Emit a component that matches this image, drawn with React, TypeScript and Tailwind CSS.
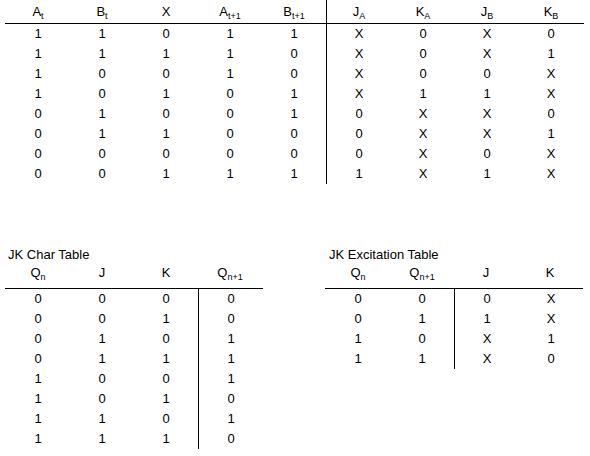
import React from "react";

type Cell = string | [string, string];

const topLeftHead: Cell[] = [["A", "t"], ["B", "t"], "X", ["A", "t+1"], ["B", "t+1"]];
const topRightHead: Cell[] = [["J", "A"], ["K", "A"], ["J", "B"], ["K", "B"]];
const topLeft = [
  ["1", "1", "0", "1", "1"],
  ["1", "1", "1", "1", "0"],
  ["1", "0", "0", "1", "0"],
  ["1", "0", "1", "0", "1"],
  ["0", "1", "0", "0", "1"],
  ["0", "1", "1", "0", "0"],
  ["0", "0", "0", "0", "0"],
  ["0", "0", "1", "1", "1"],
];
const topRight = [
  ["X", "0", "X", "0"],
  ["X", "0", "X", "1"],
  ["X", "0", "0", "X"],
  ["X", "1", "1", "X"],
  ["0", "X", "X", "0"],
  ["0", "X", "X", "1"],
  ["0", "X", "0", "X"],
  ["1", "X", "1", "X"],
];

const charLeft = [
  ["0", "0", "0"],
  ["0", "0", "1"],
  ["0", "1", "0"],
  ["0", "1", "1"],
  ["1", "0", "0"],
  ["1", "0", "1"],
  ["1", "1", "0"],
  ["1", "1", "1"],
];
const charRight = [["0"], ["0"], ["1"], ["1"], ["1"], ["0"], ["1"], ["0"]];

const excLeft = [
  ["0", "0"],
  ["0", "1"],
  ["1", "0"],
  ["1", "1"],
];
const excRight = [
  ["0", "X"],
  ["1", "X"],
  ["X", "1"],
  ["X", "0"],
];

const Label = ({ c }: { c: Cell }) =>
  typeof c === "string" ? (
    <span>{c}</span>
  ) : (
    <span>
      {c[0]}
      <span className="relative top-[3px] text-[9px]">{c[1]}</span>
    </span>
  );

const Rows = ({ rows }: { rows: string[][] }) => (
  <div>
    {rows.map((r, i) => (
      <div key={i} className="flex h-[20px] leading-[20px]">
        {r.map((v, j) => (
          <div key={j} className="w-[64px] text-center">
            {v}
          </div>
        ))}
      </div>
    ))}
  </div>
);

const Head = ({ cells }: { cells: Cell[] }) => (
  <>
    {cells.map((c, i) => (
      <div key={i} className="w-[64px] text-center">
        <Label c={c} />
      </div>
    ))}
  </>
);

const SmallTable = ({
  title,
  head,
  left,
  right,
  pad,
}: {
  title: string;
  head: Cell[];
  left: string[][];
  right: string[][];
  pad: string;
}) => (
  <div>
    <div className={`h-[16px] leading-[16px] ${pad}`}>{title}</div>
    <div className="ml-[-1px] flex h-[26px] w-[258px] border-b border-black pl-[1px] leading-[20px]">
      <Head cells={head} />
    </div>
    <div className="flex">
      <Rows rows={left} />
      <div className="border-l border-black">
        <Rows rows={right} />
      </div>
    </div>
  </div>
);

export default function App() {
  return (
    <div
      className="h-[456px] w-[590px] overflow-hidden bg-white text-[13px] text-black"
      style={{ fontFamily: '"Liberation Sans", Arial, sans-serif' }}
    >
      <div className="flex pl-[6px]">
        <div>
          <div className="ml-[-1px] flex h-[24px] items-center border-b border-black pl-[1px]">
            <Head cells={topLeftHead} />
          </div>
          <Rows rows={topLeft} />
        </div>
        <div className="border-l border-black">
          <div className="flex h-[24px] w-[257px] items-center border-b border-black">
            <Head cells={topRightHead} />
          </div>
          <Rows rows={topRight} />
        </div>
      </div>

      <div className="mt-[63px] flex pl-[6px]">
        <div className="w-[320px]">
          <SmallTable
            title="JK Char Table"
            head={[["Q", "n"], "J", "K", ["Q", "n+1"]]}
            left={charLeft}
            right={charRight}
            pad="pl-[2px]"
          />
        </div>
        <SmallTable
          title="JK Excitation Table"
          head={[["Q", "n"], ["Q", "n+1"], "J", "K"]}
          left={excLeft}
          right={excRight}
          pad="pl-[3px]"
        />
      </div>
    </div>
  );
}
